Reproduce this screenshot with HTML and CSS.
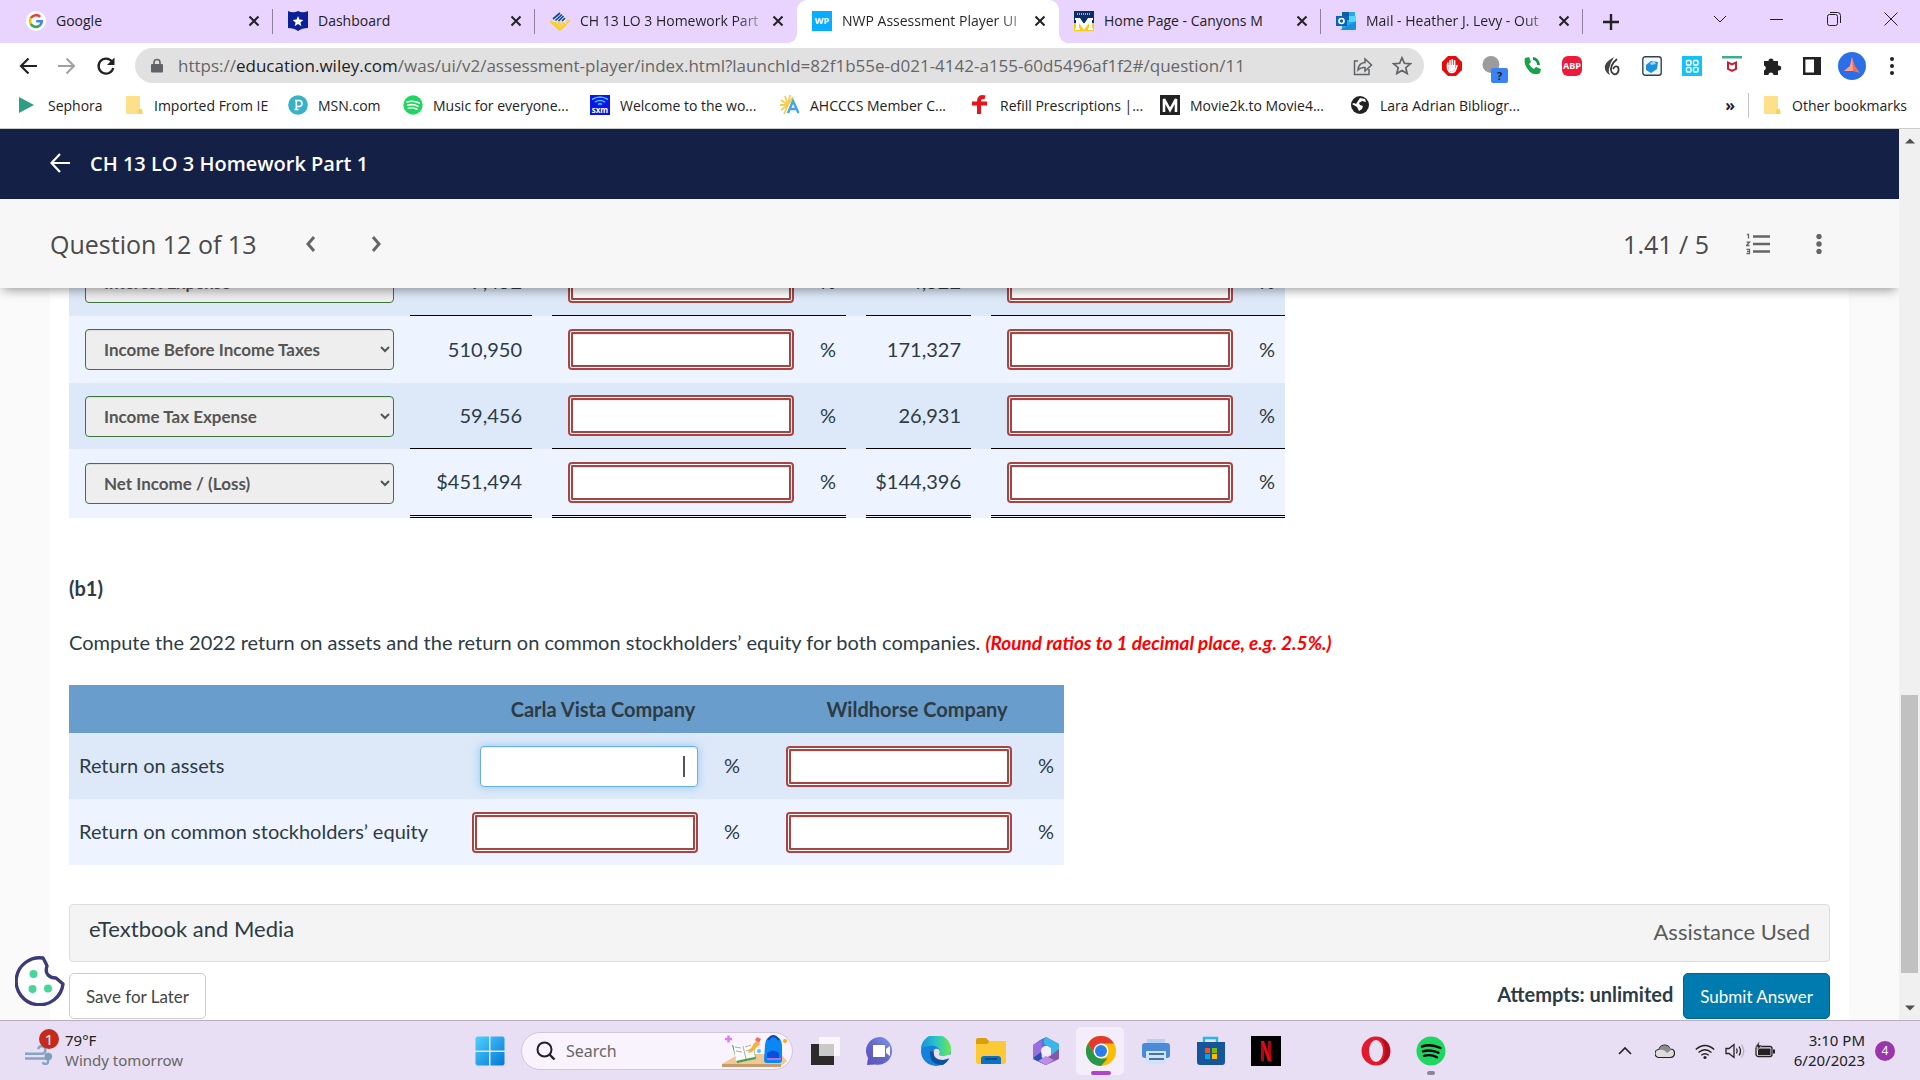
FILE: index.html
```html
<!DOCTYPE html>
<html lang="en">
<head>
    <meta charset="UTF-8">
    <meta name="viewport" content="width=device-width, initial-scale=1.0">
    <title>NWP Assessment Player UI</title>
    <link rel="stylesheet" href="styles.css">
</head>
<body>
    <svg class="defs" aria-hidden="true">
        <symbol id="close" viewBox="0 0 12 12"><path d="M1.500 1.500l9 9M10.500 1.500l-9 9" stroke="#222" stroke-width="2" fill="none"/></symbol>
        <symbol id="folder" viewBox="0 0 20 20"><path d="M3 1h12a1 1 0 0 1 1 1v12l2 2v3H3a1 1 0 0 1-1-1V2a1 1 0 0 1 1-1z" fill="#ffe08a"/><path d="M16 13.500q2.500.5 2.500 3V19H14v-3q0-2 2-2.500z" fill="#fbd35c"/></symbol>
        <symbol id="spotify" viewBox="0 0 30 30"><circle cx="15" cy="15" r="14.500" fill="#1ed760"/><path d="M6 10.500q9-3 18.500 1.500M7 15.300q8-2.300 15.500 1.500M8 19.800q7-1.800 13 1.500" fill="none" stroke="currentColor" stroke-width="2.400" stroke-linecap="round"/></symbol>
    </svg>

    <header class="browser">
        <nav class="tabs">
            <div class="tab">
                <svg class="fav" viewBox="0 0 20 20"><circle cx="10" cy="10" r="10" fill="#fff"/><g fill="none" stroke-width="2.600"><path d="M14.200 5.900A5.900 5.900 0 0 0 4.800 7.200" stroke="#ea4335"/><path d="M4.800 7.200a5.900 5.900 0 0 0 0 5.600" stroke="#fbbc05"/><path d="M4.800 12.800a5.900 5.900 0 0 0 9 1.600" stroke="#34a853"/><path d="M13.800 14.400a5.900 5.900 0 0 0 2-4.200H10.200" stroke="#4285f4"/></g></svg>
                <span>Google</span><button aria-label="Close tab"><svg><use href="#close"/></svg></button>
            </div>
            <div class="tab">
                <svg class="fav" viewBox="0 0 20 20"><path d="M0 0q5 2.500 10 0q5 2.500 10 0v17q-6 0-10 3q-4-3-10-3z" fill="#0b1f97"/><path d="M10 5l1.500 3.600 3.900.3-3 2.500 1 3.800-3.400-2.100-3.400 2.100 1-3.800-3-2.500 3.900-.3z" fill="#fff"/></svg>
                <span>Dashboard</span><button aria-label="Close tab"><svg><use href="#close"/></svg></button>
            </div>
            <div class="tab">
                <svg class="fav" viewBox="0 0 20 20"><path d="M3 8l7-6M5.500 9.500l6.500-6M8.500 10l5-5M12 10l3-3" stroke="#10508c" stroke-width="1.700"/><path d="M0 10l10 9M4 11l8 7M8 11l6 5.500M12 11l4 4M17 9l2 1-9 9" stroke="#fbd20f" stroke-width="1.700" fill="none"/></svg>
                <span class="fade">CH 13 LO 3 Homework Part</span><button aria-label="Close tab"><svg><use href="#close"/></svg></button>
            </div>
            <div class="tab active">
                <i class="fav wp">WP</i>
                <span class="fade">NWP Assessment Player UI</span><button aria-label="Close tab"><svg><use href="#close"/></svg></button>
            </div>
            <div class="tab plain">
                <svg class="fav" viewBox="0 0 20 20"><path d="M0 0h20v12H0z" fill="#0a2f66"/><path d="M0 12h20v8H0z" fill="#ffc90e"/><path d="M3 3h14" stroke="#9db4d0" stroke-width="2" stroke-dasharray="1 1"/><path d="M1 19V17h1V9H1V7h5l4 6 4-6h5v2h-1v8h1v2h-5v-2h1v-5l-5 7-5-7v5h1v2z" fill="#fff"/></svg>
                <span>Home Page - Canyons M</span><button aria-label="Close tab"><svg><use href="#close"/></svg></button>
            </div>
            <div class="tab">
                <svg class="fav" viewBox="0 0 20 20"><path d="M6 1h13v17H6z" fill="#28a8ea"/><path d="M6 1h7v8H6z" fill="#0f5ea8"/><path d="M13 5h7v6h-7z" fill="#50d9ff"/><path d="M4 19l16-9v8a1 1 0 0 1-1 1z" fill="#1490df"/><path d="M0 5h11v10H0z" fill="#0a64b4"/><circle cx="5.500" cy="10" r="2.500" fill="none" stroke="#fff" stroke-width="1.600"/></svg>
                <span class="fade">Mail - Heather J. Levy - Out</span><button aria-label="Close tab"><svg><use href="#close"/></svg></button>
            </div>
            <button class="new-tab" aria-label="New tab"><svg viewBox="0 0 16 16"><path d="M8 0v16M0 8h16" stroke="#222" stroke-width="2.400"/></svg></button>
            <div class="window-controls">
                <button aria-label="Search tabs"><svg viewBox="0 0 14 14"><path d="M1 4l6 6 6-6"/></svg></button>
                <button aria-label="Minimize"><svg viewBox="0 0 14 14"><path d="M0 7.500h13"/></svg></button>
                <button aria-label="Restore"><svg viewBox="0 0 14 14"><rect x=".5" y="2.500" width="10" height="11" rx="2"/><path d="M3 .5h7.500a3 3 0 0 1 3 3V11"/></svg></button>
                <button aria-label="Close"><svg viewBox="0 0 14 14"><path d="M.5.5l13 13M13.500.5l-13 13"/></svg></button>
            </div>
        </nav>

        <div class="toolbar">
            <button aria-label="Back"><svg viewBox="0 0 20 20"><path d="M19 10H3M10.500 2.500L3 10l7.500 7.500" fill="none" stroke="#222" stroke-width="2.200"/></svg></button>
            <button aria-label="Forward"><svg viewBox="0 0 20 20"><path d="M1 10h16M9.500 2.500L17 10l-7.500 7.500" fill="none" stroke="#a0a0a0" stroke-width="2"/></svg></button>
            <button aria-label="Reload"><svg viewBox="0 0 20 20"><path d="M16 5.500A7.500 7.500 0 1 0 17.300 12" fill="none" stroke="#222" stroke-width="2.300"/><path d="M18.500 1.500v7.500H11z" fill="#222"/></svg></button>
            <div class="omnibox">
                <svg class="lock" viewBox="0 0 12 14"><path d="M3 6V4a3 3 0 0 1 6 0v2" fill="none" stroke="#5f6368" stroke-width="1.600"/><rect y="5.500" width="12" height="8.500" rx="1" fill="#5f6368"/></svg>
                <p class="url">https://<b>education.wiley.com</b>/was/ui/v2/assessment-player/index.html?launchId=82f1b55e-d021-4142-a155-60d5496af1f2#/question/11</p>
                <button aria-label="Share"><svg viewBox="0 0 20 20"><path d="M5 5H1.500v13.500H16V13M5 14q.5-7 7-7.500V3l6.500 6-6.500 6v-3.500Q8 11 5 14z" fill="none" stroke="#5f6368" stroke-width="1.500"/></svg></button>
                <button aria-label="Bookmark"><svg viewBox="0 0 20 20"><path d="M10 1.800l2.400 5.500 6 .5-4.600 3.900 1.400 5.900L10 14.500l-5.200 3.100 1.400-5.900L1.600 7.800l6-.5z" fill="none" stroke="#5f6368" stroke-width="1.700"/></svg></button>
            </div>
            <div class="extensions">
                <svg viewBox="0 0 20 20"><path d="M6 0h8l6 6v8l-6 6H6l-6-6V6z" fill="#e60c0c"/><path d="M5.500 8.500V12q1 4.500 4 4.500 3.500 0 4.500-4l1-3M8 10V4.500M10.300 10V3.800M12.600 10V4.800M5.800 10V7" fill="none" stroke="#fff" stroke-width="1.600" stroke-linecap="round"/><path d="M6 9h7.500l-.5 4.500-3 2.500-3-1z" fill="#fff"/></svg>
                <span class="ext-grey"><svg viewBox="0 0 20 20"><circle cx="9" cy="8.500" r="8.500" fill="#9c9c9c"/></svg><i class="ext-badge">?</i></span>
                <svg viewBox="0 0 20 20"><path d="M3 2l4-1 2 5-2 2q2 4 5 5l2-2 5 2-1 4q-5 3-10-1Q1 9 3 2z" fill="#17a34a"/><path d="M11 1a8 8 0 0 1 7 8h-3a5 5 0 0 0-4-5z" fill="#129647"/></svg>
                <i class="abp">ABP</i>
                <svg viewBox="0 0 20 20"><path d="M12 1Q1 7 3 13q1 4 5 6-2-3-1-6 1-6 5-12z" fill="#444"/><path d="M15 3q-8 7-5.500 13 3 4 6 1 2-3 .5-6-3-2-5 2" fill="none" stroke="#3d3d3d" stroke-width="1.800"/></svg>
                <svg viewBox="0 0 20 20"><rect x=".8" y=".8" width="18.400" height="18.400" rx="2.500" fill="#f3f8fb" stroke="#334450" stroke-width="1.400"/><path d="M4 9l5-4 7 1-1 7-6 4-5-3z" fill="#1d8fe0"/><path d="M8 7l4-2 2 3-5 1z" fill="#9cd4fa"/></svg>
                <svg viewBox="0 0 20 20"><path d="M0 0h20v20H0z" fill="#13c2f8"/><g fill="none" stroke="#fff" stroke-width="1.400"><rect x="4.500" y="4.500" width="4.500" height="4.500" rx="1"/><rect x="11.500" y="4.500" width="4.500" height="4.500" rx="1"/><rect x="4.500" y="11.500" width="4.500" height="4.500" rx="1"/><rect x="11.500" y="11.500" width="4.500" height="4.500" rx="1"/></g></svg>
                <svg viewBox="0 0 20 20"><path d="M0 0h20v2.500H0z" fill="#3aaf8e"/><path d="M6 13V6.500l4 2 4-2V13l-4 2z" fill="none" stroke="#cb1c33" stroke-width="2"/></svg>
                <svg viewBox="0 0 20 20"><path d="M2 5h4.500a2.500 2.500 0 1 1 5 0H16v4.500a2.600 2.600 0 1 1 0 5V19h-4.500a2.500 2.500 0 0 0-5 0H2v-4.500a2.600 2.600 0 0 0 0-5z" fill="#222"/></svg>
                <svg viewBox="0 0 20 20"><path d="M2.200 2.200h15.600v15.600H2.200z" fill="#fff" stroke="#222" stroke-width="2.400"/><path d="M12 2h6v16h-6z" fill="#222"/></svg>
                <svg class="profile" viewBox="0 0 28 28"><circle cx="14" cy="14" r="14" fill="#2a6fe8"/><path d="M14 5l3 9 5 7-7-2-9 0 6-5z" fill="#f66f5b"/><path d="M14 5l1 14-9 0 6-5z" fill="#ffa08a"/></svg>
                <svg viewBox="0 0 20 20"><g fill="#222"><circle cx="10" cy="3" r="2"/><circle cx="10" cy="10" r="2"/><circle cx="10" cy="17" r="2"/></g></svg>
            </div>
        </div>

        <div class="bookmarks">
            <a href="#"><svg viewBox="0 0 20 20"><path d="M1 2l15 8-15 8z" fill="#2f9c84"/></svg>Sephora</a>
            <a href="#"><svg><use href="#folder"/></svg>Imported From IE</a>
            <a href="#"><svg viewBox="0 0 20 20"><circle cx="10" cy="10" r="9.800" fill="#38b2c8"/><path d="M7 5.500h4a3 3 0 0 1 0 6H8.500M8.300 5.500v9M6.500 14.500h4" stroke="#fff" stroke-width="1.500" fill="none"/></svg>MSN.com</a>
            <a href="#"><svg class="white"><use href="#spotify"/></svg>Music for everyone...</a>
            <a href="#"><i class="sxm"><svg viewBox="0 0 20 10"><path d="M2 4q8-5 16 0M5 6.500q5-3 10 0M8 9q2-1.500 4 0" fill="none" stroke="#38c6ff" stroke-width="1.600"/></svg>sxm</i>Welcome to the wo...</a>
            <a href="#"><svg viewBox="0 0 20 20"><path d="M8 10L1 5M8 10L5 1M8 10L10 0M8 10L0 10M8 10L1 15M8 10L4 19M8 10l5-8" stroke="#f6cd4c" stroke-width="1.800"/><path d="M8 18L13 6l5.500 12M10 14h7" fill="none" stroke="#41a5ee" stroke-width="2.400"/></svg>AHCCCS Member C...</a>
            <a href="#"><svg viewBox="0 0 20 20"><path d="M15 2.500q-6-2-6 4V19M2 8.500h15" fill="none" stroke="#e8131b" stroke-width="4"/></svg>Refill Prescriptions |...</a>
            <a href="#"><svg viewBox="0 0 20 20"><path d="M0 0h20v20H0z" fill="#222"/><path d="M4 17V4l6 11 6-11v13" fill="none" stroke="#fff" stroke-width="2.600"/></svg>Movie2k.to Movie4...</a>
            <a href="#"><svg viewBox="0 0 20 20"><circle cx="10" cy="10" r="9" fill="#222"/><path d="M10 3l5 1 1 3-4-1-3 2 1 2 3 1-1 3-3 2-2-4-5-3 2-1 2 1z" fill="#fff"/></svg>Lara Adrian Bibliogr...</a>
            <span class="more">»</span>
            <a href="#" class="other"><svg><use href="#folder"/></svg>Other bookmarks</a>
        </div>
    </header>

    <div class="viewport">
        <div class="page">
            <header class="course-bar">
                <a href="#" aria-label="Back to course"><svg viewBox="0 0 20 20"><path d="M20 10H2M10 1L1.500 10l8.500 9" fill="none" stroke="#fff" stroke-width="2.200"/></svg></a>
                <h1>CH 13 LO 3 Homework Part 1</h1>
            </header>
            <div class="question-bar">
                <h2>Question 12 of 13</h2>
                <button aria-label="Previous question"><svg viewBox="0 0 20 20"><path d="M13 3l-6 7 6 7"/></svg></button>
                <button aria-label="Next question"><svg viewBox="0 0 20 20"><path d="M7 3l6 7-6 7"/></svg></button>
                <span class="score">1.41 / 5</span>
                <button aria-label="Question list"><svg class="list" viewBox="0 0 24 24"><path d="M7 4.500h17M7 12h17M7 19.500h17" stroke-width="2.600"/><path d="M1 2.500h1.500V6.500M.5 10.200h3l-3 3.300h3M.5 17.300h3v4.200h-3M1 19.400h2" stroke-width="1.300"/></svg></button>
                <button aria-label="More options"><svg class="dots" viewBox="0 0 20 20"><circle cx="10" cy="2.500" r="2.700"/><circle cx="10" cy="10" r="2.700"/><circle cx="10" cy="17.500" r="2.700"/></svg></button>
            </div>

            <div class="scroller">
                <main>
                    <table class="statement">
                        <tr>
                            <td><select aria-label="Account"><option>Interest Expense</option></select></td>
                            <td class="num line">7,452</td><td></td>
                            <td class="field line"><input type="text" class="wrong" aria-label="Percent"></td><td class="pct line">%</td><td></td>
                            <td class="num line">4,522</td><td></td>
                            <td class="field line"><input type="text" class="wrong" aria-label="Percent"></td><td class="pct line">%</td>
                        </tr>
                        <tr>
                            <td><select aria-label="Account"><option>Income Before Income Taxes</option></select></td>
                            <td class="num">510,950</td><td></td>
                            <td class="field"><input type="text" class="wrong" aria-label="Percent"></td><td class="pct">%</td><td></td>
                            <td class="num">171,327</td><td></td>
                            <td class="field"><input type="text" class="wrong" aria-label="Percent"></td><td class="pct">%</td>
                        </tr>
                        <tr class="short">
                            <td><select aria-label="Account"><option>Income Tax Expense</option></select></td>
                            <td class="num line">59,456</td><td></td>
                            <td class="field line"><input type="text" class="wrong" aria-label="Percent"></td><td class="pct line">%</td><td></td>
                            <td class="num line">26,931</td><td></td>
                            <td class="field line"><input type="text" class="wrong" aria-label="Percent"></td><td class="pct line">%</td>
                        </tr>
                        <tr>
                            <td><select aria-label="Account"><option>Net Income / (Loss)</option></select></td>
                            <td class="num total">$451,494</td><td></td>
                            <td class="field total"><input type="text" class="wrong" aria-label="Percent"></td><td class="pct total">%</td><td></td>
                            <td class="num total">$144,396</td><td></td>
                            <td class="field total"><input type="text" class="wrong" aria-label="Percent"></td><td class="pct total">%</td>
                        </tr>
                    </table>

                    <h3>(b1)</h3>
                    <p>Compute the 2022 return on assets and the return on common stockholders’ equity for both companies. <em>(Round ratios to 1 decimal place, e.g. 2.5%.)</em></p>

                    <table class="ratios">
                        <thead>
                            <tr><th></th><th colspan="2">Carla Vista Company</th><th></th><th colspan="2">Wildhorse Company</th></tr>
                        </thead>
                        <tbody>
                            <tr>
                                <td>Return on assets</td>
                                <td class="field"><div class="caret"><input type="text" class="focused" aria-label="Carla Vista return on assets"></div></td><td class="pct">%</td><td></td>
                                <td class="field"><input type="text" class="wrong" aria-label="Wildhorse return on assets"></td><td class="pct">%</td>
                            </tr>
                            <tr>
                                <td>Return on common stockholders’ equity</td>
                                <td class="field"><input type="text" class="wrong" aria-label="Carla Vista return on equity"></td><td class="pct">%</td><td></td>
                                <td class="field"><input type="text" class="wrong" aria-label="Wildhorse return on equity"></td><td class="pct">%</td>
                            </tr>
                        </tbody>
                    </table>

                    <div class="media">
                        <a href="#">eTextbook and Media</a>
                        <span>Assistance Used</span>
                    </div>
                    <div class="actions">
                        <button class="save">Save for Later</button>
                        <strong>Attempts: unlimited</strong>
                        <button class="submit">Submit Answer</button>
                    </div>
                </main>
                <button class="cookie" aria-label="Cookie settings"><svg viewBox="0 0 50 50"><path d="M28 2Q31 7 32 10Q30 16 33 19Q36 22 41 22L48 28A23.500 23.500 0 1 1 28 2z" fill="#fff" stroke="#3d3a78" stroke-width="3.400" stroke-linejoin="round"/><g fill="#48d597"><circle cx="18.500" cy="18" r="4"/><circle cx="17.500" cy="33" r="4"/><circle cx="33" cy="32.500" r="4"/></g></svg></button>
            </div>
        </div>
        <div class="scrollbar">
            <svg viewBox="0 0 10 6"><path d="M0 5.500L5 .5l5 5z"/></svg>
            <div class="thumb"></div>
            <svg viewBox="0 0 10 6"><path d="M0 .5l5 5 5-5z"/></svg>
        </div>
    </div>

    <footer class="taskbar">
        <div class="weather">
            <div class="wind">
                <svg viewBox="0 0 30 30"><path d="M0 18h18a4 4 0 1 0-4-5M0 23h22a3 3 0 1 1-3 4" fill="none" stroke="#86a5c4" stroke-width="2.600"/><circle cx="25" cy="21" r="4" fill="#7d9dbd"/></svg>
                <i>1</i>
            </div>
            <p><b>79°F</b><br>Windy tomorrow</p>
        </div>

        <div class="apps">
            <button aria-label="Start"><svg viewBox="0 0 30 30"><defs><linearGradient id="win" x1="0" y1="0" x2="1" y2="1"><stop offset="0" stop-color="#4fd0ff"/><stop offset="1" stop-color="#0377d6"/></linearGradient></defs><path d="M2 .5h12v14H.5V2zM15.500.5H28l1.500 1.500v12.500h-14zM.5 16H14v13.500H2L.5 28zM15.500 16h14v12L28 29.500H15.500z" fill="url(#win)"/></svg></button>
            <label class="search">
                <svg class="glass" viewBox="0 0 20 20"><circle cx="8.500" cy="8.500" r="7" fill="none" stroke="#222" stroke-width="2"/><path d="M13.500 13.500l5 5" stroke="#222" stroke-width="2.400"/></svg>
                <input type="text" placeholder="Search">
                <svg class="school" viewBox="0 0 70 34"><path d="M0 30L17 20h42l6 7-6 5H0z" fill="#f0c796"/><path d="M0 30h59v3H0z" fill="#c79c6c"/><path d="M10 11l11 2 10-5 3 17-10 2-9 2z" fill="#43a047"/><path d="M11 9l10 3 10-5 2 16-10 2-9 2z" fill="#fafafa"/><path d="M21 12l3 13M13 13l6 1M14 17l6 1M23 13l6-2M24 17l6-2" stroke="#aaa"/><path d="M27 17l7-10 4 3-8 8-4 1z" fill="#f9b233"/><path d="M33 6l2-3 4 2-2 4z" fill="#f36c5f"/><path d="M43 11q0-8 8-9 9 1 9 9v15q0 3-3 3H45q-3 0-3-3z" fill="#0a86f5"/><path d="M46 6q5-8 11 0" stroke="#0f4ba8" stroke-width="2" fill="none"/><path d="M45 19q6-5 12 0v6H45z" fill="#0750d8"/><path d="M45 25h14" stroke="#a974f5" stroke-width="2"/><path d="M3 5h7M6.500 1.500v7" stroke="#df7af0" stroke-width="2.400"/><circle cx="37" cy="17" r="2" fill="#59c8e8"/><circle cx="63" cy="7" r="2" fill="#ffa31a"/></svg>
            </label>
            <button aria-label="Task view"><svg viewBox="0 0 30 30"><path d="M0 8h23v21H0z" fill="#2b2b2b"/><path d="M8 1h21v19H8z" fill="#fff" opacity=".75"/></svg></button>
            <button aria-label="Chat"><svg viewBox="0 0 30 30"><defs><linearGradient id="chat" x1="0" y1="1" x2="1" y2="0"><stop offset="0" stop-color="#5b4fc0"/><stop offset=".5" stop-color="#6468c8"/><stop offset="1" stop-color="#7d9ff0"/></linearGradient></defs><path d="M15 1a14 14 0 1 1-6 27.500L1 29l1-7A14 14 0 0 1 15 1z" fill="url(#chat)"/><path d="M7 9h12v12H7zM20 13l4-3v10l-4-3z" fill="#fff"/></svg></button>
            <button aria-label="Edge"><svg viewBox="0 0 30 30"><defs><linearGradient id="edge"><stop offset="0" stop-color="#1492dc"/><stop offset=".5" stop-color="#2bc3c9"/><stop offset="1" stop-color="#6bea4b"/></linearGradient></defs><circle cx="15" cy="15" r="15" fill="#1482dc"/><path d="M0 13A15 15 0 0 1 30 14q0 6-7 6-5 0-5-2 2-2 0-5-4-5-10-3-5 1-8 3z" fill="url(#edge)"/><path d="M9 15q-1 14 13 14a15 15 0 0 0 6-6q-12 4-14-7z" fill="#0c519e"/><path d="M13 14q-2 10 9 10l7-2 2-4-8 2q-5 0-5-2 2-3-1-5-3-1-4 1z" fill="#e8dff4"/></svg></button>
            <button aria-label="File Explorer"><svg viewBox="0 0 30 30"><path d="M0 4q0-2 2-2h8l3 3v6H0z" fill="#dd9d0b"/><path d="M0 8h11l3-3h16v21q0 2-2 2H2q-2 0-2-2z" fill="#fdc935"/><path d="M5 23q0-3 3-3h14q3 0 3 3v5H5z" fill="#0c72c4"/><path d="M9 23h12" stroke="#0a4b88" stroke-width="2"/></svg></button>
            <button aria-label="Microsoft 365"><svg viewBox="0 0 30 30"><path d="M9 4l6-3 13 7v8l-9-5-4-1-5 3v10l-8-3V9z" fill="#5774d8"/><path d="M15 1l13 7v14l-8-3v-7l-6-3q-3-5 1-8z" fill="#3cb6e8"/><path d="M28 13v10l-13 6-8-4 12-5z" fill="#8258a8"/><path d="M2 9l9-5q-1 4 0 8v11l4 6L2 23z" fill="#9a6fe0"/><path d="M10 16v8l-8-2zM2 23l9-2 4 8z" fill="#294fb5"/><path d="M15 20l8 4-8 5-8-4z" fill="#bd8bea"/><circle cx="15" cy="15" r="5" fill="#f4eefb"/></svg></button>
            <button aria-label="Chrome" class="current"><svg viewBox="0 0 30 30"><circle cx="15" cy="15" r="15" fill="#fbbc04"/><path d="M2 7.500A15 15 0 0 1 28 7.500H15L8.500 18.700z" fill="#e23b2e"/><path d="M2 7.500L8.500 18.700 15 22.500h6.500L15 30A15 15 0 0 1 2 7.500z" fill="#279847"/><circle cx="15" cy="15" r="7.500" fill="#fff"/><circle cx="15" cy="15" r="6" fill="#2b7de9"/></svg></button>
            <button aria-label="Printer"><svg viewBox="0 0 30 30"><path d="M6 3h18v8H6z" fill="#b4d1f5"/><rect x="1" y="7" width="28" height="15" rx="3" fill="#4a8ad6"/><path d="M5 15h20v13H5z" fill="#cfe3fb"/><path d="M8 18h15M8 23h15" stroke="#214c93" stroke-width="1.600"/></svg></button>
            <button aria-label="Microsoft Store"><svg viewBox="0 0 30 30"><path d="M8 7V2h13v5" fill="none" stroke="#25b7ed" stroke-width="2.400"/><path d="M1 6h28v20q0 3-3 3H4q-3 0-3-3z" fill="#15569a"/><path d="M9 12h5v5H9z" fill="#f25022"/><path d="M16 12h5v5h-5z" fill="#7fba00"/><path d="M9 18h5v5H9z" fill="#00a4ef"/><path d="M16 18h5v5h-5z" fill="#ffb900"/></svg></button>
            <button aria-label="Netflix"><svg viewBox="0 0 30 30"><path d="M0 0h30v30H0z"/><path d="M10 5h3v20h-3zM17 5h3v20h-3z" fill="#b1060f"/><path d="M10 5h3l7 20h-3z" fill="#e50914"/></svg></button>
            <span class="slot"></span>
            <button aria-label="Opera"><svg viewBox="0 0 30 30"><ellipse cx="15" cy="15" rx="14.500" ry="14.500" fill="#e31a2e"/><path d="M19 2q10 3 10 13T19 28q5-5 5-13T19 2z" fill="#b50e1c"/><ellipse cx="15" cy="15" rx="7" ry="11" fill="#e8dff4"/></svg></button>
            <button aria-label="Spotify" class="running"><svg><use href="#spotify"/></svg></button>
        </div>

        <div class="tray">
            <svg viewBox="0 0 20 20"><path d="M4 13l6-6 6 6" fill="none" stroke="#222" stroke-width="1.600"/></svg>
            <svg viewBox="0 0 20 20"><path d="M4 16.500a4 4 0 0 1 0-8q1-4 5.500-4.500 4 0 5.500 4 4.500 0 4.500 4t-4 4.500z" fill="#ddd" stroke="#222" stroke-width="1.200"/><path d="M4 9q5-1 8 3l4-3q-2-4.500-6-4.500-5 0-6 4.500z" fill="#8c8c8c"/></svg>
            <svg class="wifi" viewBox="0 0 20 20"><path d="M.8 8.500q9.200-8 18.400 0M3.500 11.500q6.500-5.500 13 0M6.300 14.300q3.700-3 7.400 0" fill="none" stroke="#222" stroke-width="1.400"/><circle cx="10" cy="16.500" r="1.600" fill="#222"/></svg>
            <svg viewBox="0 0 20 20"><path d="M1 7.500h3l5-4v13l-5-4H1z" fill="none" stroke="#222" stroke-width="1.300"/><path d="M11.500 7.500q1.500 2.500 0 5M14 5.500q3 4.500 0 9" fill="none" stroke="#222" stroke-width="1.300"/><path d="M16.500 3.500q4.500 6.500 0 13" fill="none" stroke="#b9b1c2" stroke-width="1.300"/></svg>
            <svg viewBox="0 0 20 20"><rect x="1" y="5.500" width="16" height="10" rx="2" fill="none" stroke="#222" stroke-width="1.300"/><path d="M3 7.500h12.500v6.500H3zM18 8.500h2v4h-2z" fill="#222"/><path d="M4.500 0L0 6h3L2 10l5-6H4z" fill="#222" stroke="#e8dff4" stroke-width=".6"/></svg>
            <p>3:10 PM<br>6/20/2023</p>
            <i>4</i>
        </div>
    </footer>
</body>
</html>
```
FILE: styles.css
```css
* { box-sizing: border-box; }
body {
    display: flex;
    flex-direction: column;
    height: 100vh;
    margin: 0;
    overflow: hidden;
    background: #fff;
    font-family: "Open Sans", "Noto Sans", sans-serif;
    font-size: 14px;
    color: #222;
}
button { padding: 0; border: 0; background: none; font-family: inherit; }
h1, h2, h3, p { margin: 0; }
i { font-style: normal; }
svg { display: block; flex: none; }
a { color: inherit; text-decoration: none; }
.defs { position: absolute; width: 0; height: 0; }

/* tab strip */
.tabs { display: flex; align-items: center; height: 43px; padding-left: 11px; background: #e8d4ff; }
.tab {
    position: relative;
    display: flex;
    align-items: center;
    width: 262px;
    height: 43px;
    padding: 0 13px 2px 15px;
}
.tab::after { content: ""; position: absolute; right: 0; top: 9px; width: 1px; height: 25px; background: #8e8299; }
.tab span { flex: 1; margin: 0 8px 0 10px; white-space: nowrap; }
.tab .fade { background: linear-gradient(90deg, #222 85%, #bbb); background-clip: text; color: transparent; }
.tab button svg { width: 12px; height: 12px; }
.fav { width: 20px; height: 20px; }
.wp { background: #07aeff; color: #fff; font-size: 9px; font-weight: 700; line-height: 20px; text-align: center; }
.tab.active { background: #fff; border-radius: 10px 10px 0 0; }
.tab.active::before,
.tab.active::after { content: ""; position: absolute; top: auto; bottom: 0; width: 10px; height: 10px; background: radial-gradient(circle at 0 0, transparent 10px, #fff 10px); }
.tab.active::before { left: -10px; }
.tab.active::after { right: -10px; transform: scaleX(-1); }
.tab:has(+ .active)::after { display: none; }
.new-tab { margin-left: 20px; }
.new-tab svg { width: 16px; height: 16px; }
.window-controls { display: flex; margin-left: auto; padding: 0 1px 6px 0; }
.window-controls button { width: 57px; }
.window-controls svg { width: 14px; height: 14px; margin: 0 auto; fill: none; stroke: #222; stroke-width: 1; }

/* address bar */
.toolbar { display: flex; align-items: center; height: 45px; padding: 0 18px; }
.toolbar svg { width: 20px; height: 20px; }
.toolbar > button { margin-right: 19px; }
.omnibox { display: flex; flex: 1; align-items: center; height: 35px; padding: 0 12px 0 16px; border-radius: 18px; background: #e1e1e1; }
.omnibox .lock { width: 12px; height: 15px; }
.omnibox button { margin-left: 19px; }
.url { flex: 1; margin-left: 15px; color: #666; font-size: 17px; white-space: nowrap; }
.url b { color: #222; font-weight: 400; }
.extensions { display: flex; align-items: center; gap: 20px; margin-left: 18px; }
.extensions .profile { width: 28px; height: 28px; margin: 0 -4px; }
.ext-grey { position: relative; }
.ext-badge { position: absolute; left: 9px; top: 12px; width: 17px; height: 15px; border-radius: 2px; background: #3b82f6; font-size: 11px; font-weight: 700; line-height: 15px; text-align: center; }
.abp { width: 20px; height: 20px; border-radius: 6px; background: #ed1b3b; color: #fff; font-size: 9px; font-weight: 700; line-height: 20px; text-align: center; }

/* bookmarks */
.bookmarks {
    display: grid;
    grid-template-columns: 106px 164px 115px 187px repeat(5, 190px) 1fr auto;
    align-items: center;
    height: 41px;
    padding: 0 13px 6px 18px;
    border-bottom: 1px solid #ccc;
}
.bookmarks a { display: flex; align-items: center; gap: 10px; white-space: nowrap; }
.bookmarks svg { width: 20px; height: 20px; }
.bookmarks .white { color: #fff; }
.sxm { width: 20px; height: 20px; background: #0b15e8; color: #fff; font-size: 8px; font-weight: 700; line-height: 8px; text-align: center; }
.bookmarks .sxm svg { height: 11px; }
.more { padding-right: 13px; font-weight: 700; font-size: 16px; text-align: right; }
.other { height: 25px; padding-left: 13px; border-left: 1px solid #c4c4c4; }

/* player */
.viewport { display: flex; flex: 1; min-height: 0; }
.page { display: flex; flex: 1; flex-direction: column; min-width: 0; overflow: hidden; }
.course-bar { display: flex; flex: none; align-items: center; gap: 20px; height: 70px; padding: 0 0 2px 50px; background: #142046; color: #fff; }
.course-bar svg { width: 20px; height: 20px; }
.course-bar h1 { font-size: 20px; font-weight: 600; }
.question-bar {
    position: relative;
    z-index: 1;
    display: flex;
    flex: none;
    align-items: center;
    height: 89px;
    padding: 0 70px 0 50px;
    background: #f7f7f7;
    box-shadow: 0 5px 10px -3px rgba(0, 0, 0, .4);
    color: #4a4a4a;
}
.question-bar h2 { margin-right: 45px; font-size: 25px; font-weight: 400; }
.question-bar svg { width: 20px; height: 20px; fill: none; stroke: #666; stroke-width: 3; }
.question-bar button + button { margin-left: 45px; }
.question-bar .score { margin-left: auto; margin-right: 37px; font-size: 25px; }
.question-bar .list { width: 24px; height: 24px; }
.question-bar .dots { margin-left: -6px; fill: #666; stroke: none; }
.scroller { position: relative; flex: 1; min-height: 0; overflow: hidden; padding: 0 50px; background: #fafafa; }
/* scrolled part of the way down the question */
main {
    margin-top: -39px;
    padding: 0 19px 80px;
    background: #fff;
    color: #2d3b45;
    font-family: Lato, sans-serif;
    font-size: 20px;
    line-height: 28px;
}

table { border-collapse: separate; border-spacing: 0; table-layout: fixed; }
td, th { padding: 0; }
tr { height: 67px; background: #edf4ff; }
.statement { width: 1216px; }
.statement tr:nth-child(odd), .ratios tbody tr:nth-child(odd) { background: #dde9f9; }
.statement td:nth-child(1) { width: 341px; padding-left: 16px; }
.statement td:nth-child(2) { width: 122px; }
.statement td:nth-child(3), .statement td:nth-child(6), .statement td:nth-child(8) { width: 20px; }
.statement td:nth-child(7) { width: 105px; }
.statement .field { width: 258px; }
.statement .pct { width: 36px; }
.statement .short { height: 66px; }
.statement tr:last-child { height: 69px; }
.num, .pct { padding-right: 10px; padding-bottom: 2px; text-align: right; }
.field { padding: 0 16px; }
.line { border-bottom: 1px solid #000; }
.total { border-bottom: 3px double #000; }
select {
    display: block;
    width: 309px;
    height: 41px;
    padding: 0 1px 0 14px;
    border: 1px solid #3c763d;
    border-right-width: 1px;
    border-radius: 4px;
    background: #eee;
    box-shadow: inset 0 1px 1px rgba(0, 0, 0, .075);
    color: #555;
    font: 700 17px Lato, sans-serif;
}
input {
    display: block;
    width: 226px;
    height: 41px;
    padding: 0 10px;
    border: 1px solid #ccc;
    border-radius: 4px;
    background: #fff;
    box-shadow: inset 0 1px 1px rgba(0, 0, 0, .075);
    font: 18px Lato, sans-serif;
    text-align: right;
}
.wrong { border: 5px double #a94442; }
.focused { width: 218px; margin-left: 8px; border-color: #66afe9; box-shadow: inset 0 1px 1px rgba(0, 0, 0, .075), 0 0 10px rgba(102, 175, 233, .6); }
.caret { position: relative; width: 226px; }
.caret::after { content: ""; position: absolute; right: 13px; top: 10px; width: 2px; height: 21px; background: #555; }

h3 { margin-top: 56px; font-size: 20px; }
main p { margin: 26px 0 28px; }
main em { color: #f00; font-size: 19px; font-weight: 700; }
.ratios { width: 995px; }
.ratios tr { height: 66px; }
.ratios thead tr { height: 48px; background: #699dcb; }
.ratios th:nth-child(1) { width: 387px; }
.ratios th:nth-child(2), .ratios th:nth-child(4) { width: 294px; }
.ratios th:nth-child(3) { width: 20px; }
.ratios td:first-child { padding: 0 0 2px 10px; }
.ratios .pct { width: 36px; }
.media { display: flex; justify-content: space-between; height: 58px; margin-top: 39px; padding: 10px 19px; border: 1px solid #ddd; border-radius: 4px; background: #f4f4f4; font-size: 22px; }
.media span { padding-top: 3px; color: #5a5a5a; }
.actions { display: flex; align-items: center; margin-top: 11px; }
.actions strong { margin: 0 10px 4px auto; }
.actions button { height: 46px; padding: 0 16px; border: 1px solid #ccc; border-radius: 5px; color: #444; font-size: 17px; }
.actions .submit { border-color: #00638c; background: #007bb0; color: #fff; }
.cookie { position: absolute; left: 15px; bottom: 14px; }
.cookie svg { width: 50px; height: 50px; }
.scrollbar { display: flex; flex-direction: column; align-items: center; width: 21px; padding: 9px 0; background: #f0f0f0; }
.scrollbar svg { width: 10px; height: 6px; fill: #505050; }
.thumb { width: 17px; height: 278px; margin: auto 0 32px; background: #c1c1c1; }

/* taskbar */
.taskbar { display: grid; grid-template-columns: 1fr auto 1fr; align-items: center; height: 60px; border-top: 1px solid #b8b0c2; background: #e8dff4; font-family: "Noto Sans", sans-serif; }
.weather { display: flex; align-items: center; gap: 12px; padding: 0 0 2px 25px; color: #666; font-size: 15px; line-height: 20px; }
.weather b { color: #222; font-weight: 400; }
.wind { position: relative; padding-top: 2px; }
.wind svg { width: 28px; height: 28px; }
.wind i { position: absolute; left: 14px; top: -6px; width: 20px; border-radius: 10px; background: #c42b1c; color: #fff; text-align: center; }
.apps { display: flex; align-items: center; }
.apps button, .slot { position: relative; display: grid; place-items: center; width: 55px; height: 48px; }
.apps button svg { width: 30px; height: 30px; }
.search { display: flex; align-items: center; width: 272px; height: 38px; margin: 0 5px 0 4px; padding: 0 0 0 14px; border: 1px solid #d0c6dc; border-radius: 19px; background: #f8f3fd; overflow: hidden; }
.search input { flex: 1; width: 0; min-width: 0; height: 30px; border: 0; background: none; box-shadow: none; font: 16px "Noto Sans", sans-serif; text-align: left; }
.search input::placeholder { color: #666; }
.glass { width: 20px; height: 20px; }
.school { width: 70px; height: 36px; }
.apps .current::before { content: ""; position: absolute; top: 0; left: 3px; width: 48px; height: 48px; border-radius: 5px; background: #f4eefb; }
.current svg { position: relative; }
.current::after, .running::after { content: ""; position: absolute; bottom: 0; left: 18px; width: 20px; height: 4px; border-radius: 2px; background: #b045c6; }
.running::after { left: 24px; width: 8px; background: #8b8494; }
.tray { display: flex; align-items: center; justify-content: flex-end; gap: 10px; padding-right: 25px; }
.tray svg { width: 20px; height: 20px; }
.tray svg:first-child, .tray svg:nth-child(2) { margin-right: 10px; }
.tray p { width: 80px; padding-bottom: 2px; font-size: 15px; line-height: 20px; text-align: right; }
.tray i { width: 20px; height: 20px; border-radius: 10px; background: #9a36ab; color: #fff; font-size: 12px; line-height: 20px; text-align: center; }
```
